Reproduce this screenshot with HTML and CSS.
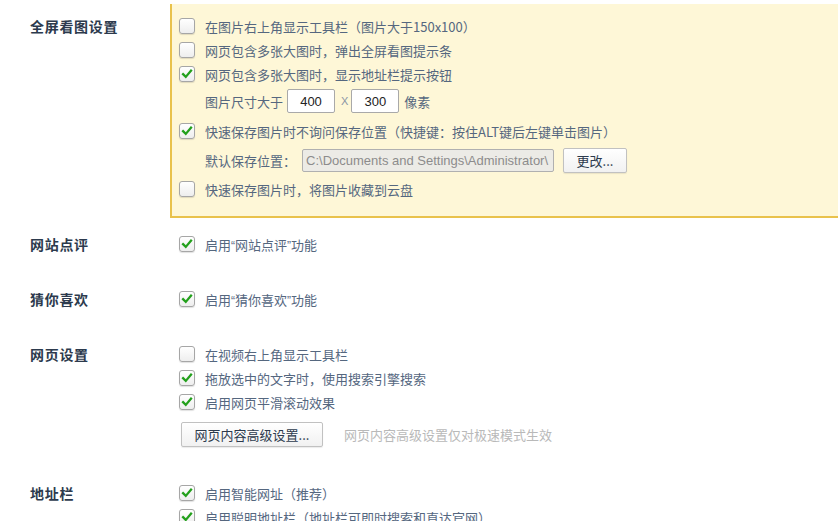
FILE: index.html
```html
<!DOCTYPE html>
<html lang="zh-CN">
<head>
<meta charset="utf-8">
<title>设置</title>
<link rel="stylesheet" href="styles.css">
</head>
<body>
<div class="page">
  <section class="sec sec-first">
    <div class="label first-label">全屏看图设置</div>
    <div class="panel">
      <div class="row"><span class="cb"></span><span>在图片右上角显示工具栏（图片大于150x100）</span></div>
      <div class="row"><span class="cb"></span><span>网页包含多张大图时，弹出全屏看图提示条</span></div>
      <div class="row"><span class="cb on"><svg viewBox="0 0 16 16"><path d="M3.5 8.2 L6.6 11.3 L12.6 4.2" fill="none" stroke="#23a01c" stroke-width="2.6" stroke-linecap="square"/></svg></span><span>网页包含多张大图时，显示地址栏提示按钮</span></div>
      <div class="row sub tall"><span>图片尺寸大于</span><span class="num">400</span><span class="x">X</span><span class="num">300</span><span class="unit">像素</span></div>
      <div class="row tall"><span class="cb on"><svg viewBox="0 0 16 16"><path d="M3.5 8.2 L6.6 11.3 L12.6 4.2" fill="none" stroke="#23a01c" stroke-width="2.6" stroke-linecap="square"/></svg></span><span>快速保存图片时不询问保存位置（快捷键：按住ALT键后左键单击图片）</span></div>
      <div class="row sub mid"><span>默认保存位置：</span><span class="path">C:\Documents and Settings\Administrator\</span><span class="btn btn-change">更改...</span></div>
      <div class="row tall"><span class="cb"></span><span>快速保存图片时，将图片收藏到云盘</span></div>
    </div>
  </section>

  <section class="sec sec-a">
    <div class="label">网站点评</div>
    <div class="body">
      <div class="row"><span class="cb on"><svg viewBox="0 0 16 16"><path d="M3.5 8.2 L6.6 11.3 L12.6 4.2" fill="none" stroke="#23a01c" stroke-width="2.6" stroke-linecap="square"/></svg></span><span>启用<span class="q">“</span>网站点评<span class="q">”</span>功能</span></div>
    </div>
  </section>

  <section class="sec sec-b">
    <div class="label">猜你喜欢</div>
    <div class="body">
      <div class="row"><span class="cb on"><svg viewBox="0 0 16 16"><path d="M3.5 8.2 L6.6 11.3 L12.6 4.2" fill="none" stroke="#23a01c" stroke-width="2.6" stroke-linecap="square"/></svg></span><span>启用<span class="q">“</span>猜你喜欢<span class="q">”</span>功能</span></div>
    </div>
  </section>

  <section class="sec sec-b">
    <div class="label">网页设置</div>
    <div class="body">
      <div class="row"><span class="cb"></span><span>在视频右上角显示工具栏</span></div>
      <div class="row"><span class="cb on"><svg viewBox="0 0 16 16"><path d="M3.5 8.2 L6.6 11.3 L12.6 4.2" fill="none" stroke="#23a01c" stroke-width="2.6" stroke-linecap="square"/></svg></span><span>拖放选中的文字时，使用搜索引擎搜索</span></div>
      <div class="row"><span class="cb on"><svg viewBox="0 0 16 16"><path d="M3.5 8.2 L6.6 11.3 L12.6 4.2" fill="none" stroke="#23a01c" stroke-width="2.6" stroke-linecap="square"/></svg></span><span>启用网页平滑滚动效果</span></div>
      <div class="row btn-row"><span class="btn btn-adv">网页内容高级设置...</span><span class="note">网页内容高级设置仅对极速模式生效</span></div>
    </div>
  </section>

  <section class="sec sec-c">
    <div class="label">地址栏</div>
    <div class="body">
      <div class="row"><span class="cb on"><svg viewBox="0 0 16 16"><path d="M3.5 8.2 L6.6 11.3 L12.6 4.2" fill="none" stroke="#23a01c" stroke-width="2.6" stroke-linecap="square"/></svg></span><span>启用智能网址（推荐）</span></div>
      <div class="row"><span class="cb on"><svg viewBox="0 0 16 16"><path d="M3.5 8.2 L6.6 11.3 L12.6 4.2" fill="none" stroke="#23a01c" stroke-width="2.6" stroke-linecap="square"/></svg></span><span>启用聪明地址栏（地址栏可即时搜索和直达官网）</span></div>
    </div>
  </section>
</div>
</body>
</html>
```

FILE: styles.css
```css
html, body {
  margin: 0;
  padding: 0;
  background: #ffffff;
  overflow: hidden;
}

.page {
  width: 838px;
  height: 521px;
  overflow: hidden;
  font-family: "Noto Sans CJK SC", "Liberation Sans", sans-serif;
  font-size: 13px;
  color: #55677f;
}

.sec {
  display: grid;
  grid-template-columns: 170px 1fr;
}

.sec-first {
  padding-top: 4px;
}

.sec-a { margin-top: 14px; }
.sec-b { margin-top: 31px; }
.sec-c { margin-top: 27px; }

.label {
  padding-left: 30px;
  line-height: 24px;
  height: 24px;
  font-size: 14px;
  font-weight: bold;
  letter-spacing: 0.7px;
  color: #2c3a4d;
}

.first-label {
  margin-top: 10px;
}

.panel {
  background: #fef7d7;
  border-left: 2px solid #e9c24c;
  border-bottom: 2px solid #e9c24c;
  padding: 10px 0 12px 7px;
}

.body {
  padding-left: 9px;
}

.row {
  display: flex;
  align-items: center;
  height: 24px;
  white-space: nowrap;
}

.row.tall { height: 30px; }
.row.mid { height: 28px; }

.row.sub {
  padding-left: 26px;
}

.q {
  font-family: "Liberation Sans", sans-serif;
  font-size: 12px;
}

.cb {
  box-sizing: border-box;
  width: 16px;
  height: 16px;
  border: 1px solid #a6a6a6;
  border-radius: 3px;
  background: linear-gradient(#ffffff, #eeeeee);
  box-shadow: 0 1px 1px rgba(0, 0, 0, 0.12);
  margin-right: 10px;
  display: flex;
  align-items: center;
  justify-content: center;
  flex: none;
}

.cb svg {
  width: 14px;
  height: 14px;
  display: block;
}

.num {
  box-sizing: border-box;
  width: 48px;
  height: 24px;
  border: 1px solid #a9a9a9;
  border-radius: 2px;
  background: #ffffff;
  color: #222222;
  font-family: "Liberation Sans", sans-serif;
  font-size: 13px;
  display: flex;
  align-items: center;
  justify-content: center;
  margin-left: 4px;
}

.x {
  font-family: "Liberation Sans", sans-serif;
  font-size: 11px;
  color: #8a95a5;
  margin: 0 3px 0 6px;
}

.x + .num {
  margin-left: 0;
}

.unit {
  margin-left: 5px;
}

.path {
  box-sizing: border-box;
  width: 252px;
  height: 23px;
  margin-left: 6px;
  border: 1px solid #b0b0b0;
  border-radius: 2px;
  background: #ecebe6;
  color: #8c8c8c;
  font-family: "Liberation Sans", sans-serif;
  font-size: 13px;
  line-height: 21px;
  padding-left: 3px;
  overflow: hidden;
}

.btn {
  box-sizing: border-box;
  height: 25px;
  border: 1px solid #c1c1c1;
  border-radius: 2px;
  background: linear-gradient(#ffffff, #f1f1f1);
  box-shadow: 0 1px 1px rgba(0, 0, 0, 0.08);
  color: #2c3a4d;
  display: flex;
  align-items: center;
  justify-content: center;
}

.btn-change {
  width: 64px;
  margin-left: 9px;
}

.btn-row {
  height: 40px;
}

.btn-adv {
  width: 142px;
  margin-left: 2px;
}

.note {
  margin-left: 21px;
  color: #b9b9b9;
}
```
